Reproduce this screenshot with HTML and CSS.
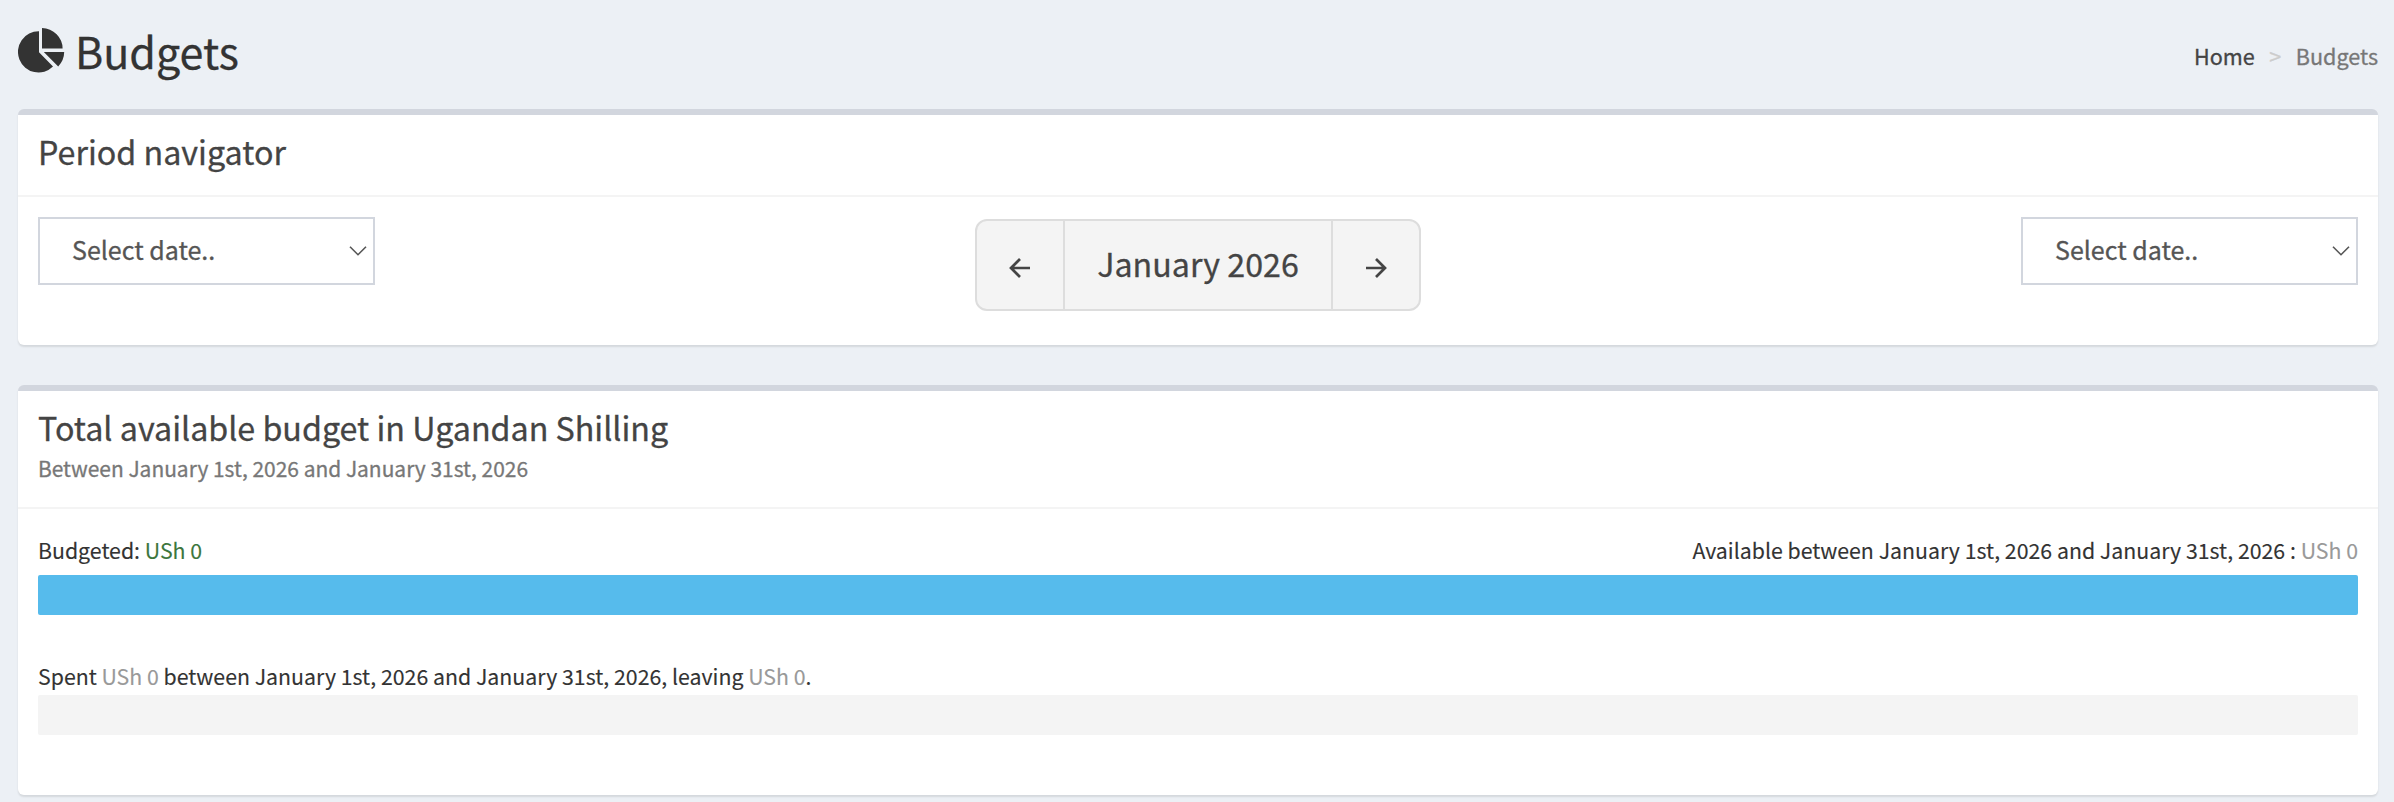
FILE: index.html
```html
<!DOCTYPE html>
<html lang="en">
<head>
<meta charset="utf-8">
<title>Budgets</title>
<link rel="stylesheet" href="styles.css">
</head>
<body>
<header class="page-header">
  <h1 class="page-title">
    <svg class="pie" width="48" height="46" viewBox="0 0 48 46"><path d="M21 4.3V25.3L35 39.6A20.6 20.6 0 1 1 21 4.3ZM24 1A21 20.5 0 0 1 44.6 21.6H24ZM25.8 25H46.2A21 21 0 0 1 40.2 39.4Z"/></svg>
    <span class="page-name">Budgets</span>
  </h1>
  <nav class="breadcrumb"><a class="crumb-link">Home</a><span class="crumb-sep">&gt;</span><span class="crumb-current">Budgets</span></nav>
</header>
<main class="content">
  <section class="box">
    <div class="box-header"><h3 class="box-title">Period navigator</h3></div>
    <div class="box-body navigator">
      <div class="select"><span class="select-text">Select date..</span><svg class="chevron" width="20" height="12" viewBox="0 0 20 12"><path d="M2 1.7L10 9.7L18 1.7"/></svg></div>
      <div class="btn-group">
        <div class="btn btn-arrow"><svg class="arrow" width="22" height="22" viewBox="0 0 22 22"><path d="M21 11H2M11 2L2 11L11 20"/></svg></div>
        <div class="btn btn-period">January 2026</div>
        <div class="btn btn-arrow"><svg class="arrow" width="22" height="22" viewBox="0 0 22 22"><path d="M1 11H20M11 2L20 11L11 20"/></svg></div>
      </div>
      <div class="select"><span class="select-text">Select date..</span><svg class="chevron" width="20" height="12" viewBox="0 0 20 12"><path d="M2 1.7L10 9.7L18 1.7"/></svg></div>
    </div>
  </section>
  <section class="box">
    <div class="box-header header-tall">
      <h3 class="box-title">Total available budget in Ugandan Shilling</h3>
      <div class="subtitle">Between January 1st, 2026 and January 31st, 2026</div>
    </div>
    <div class="box-body budget">
      <div class="line line-budgeted">
        <span>Budgeted: <span class="green">USh 0</span></span>
        <span>Available between January 1st, 2026 and January 31st, 2026 : <span class="gray">USh 0</span></span>
      </div>
      <div class="progress progress-info"></div>
      <div class="line line-spent">
        <span>Spent <span class="gray">USh 0</span> between January 1st, 2026 and January 31st, 2026, leaving <span class="gray">USh 0</span>.</span>
      </div>
      <div class="progress"></div>
    </div>
  </section>
</main>
</body>
</html>
```
FILE: styles.css
```css
* { box-sizing: border-box; }
body {
  margin: 0;
  height: 802px;
  background: #ecf0f5;
  color: #333;
  font-family: "Noto Sans CJK SC", "Noto Sans", sans-serif;
  font-size: 21.3px;
  -webkit-text-stroke: .3px currentColor;
}
.page-header {
  display: flex;
  justify-content: space-between;
  height: 109px;
  padding: 24px 16px 0 18px;
}
.page-title {
  display: flex;
  margin: 0;
  font-size: 43px;
  font-weight: 400;
  line-height: 52px;
}
.pie { margin-top: 3px; fill: #333; }
.page-name { margin-left: 9px; }
.breadcrumb {
  display: flex;
  padding-top: 17px;
  font-size: 21.6px;
  line-height: 30px;
}
.crumb-link { color: #444; }
.crumb-sep { width: 41px; text-align: center; color: #ccc; }
.crumb-current { color: #777; }
.content { padding: 0 16px 0 18px; }
.box {
  margin-bottom: 40px;
  background: #fff;
  border-top: 6px solid #d2d6de;
  border-radius: 6px;
  box-shadow: 0 2px 2px rgba(0, 0, 0, .1);
}
.box:last-child { margin-bottom: 0; }
.box-header {
  height: 82px;
  padding: 18px 20px 0;
  border-bottom: 2px solid #f4f4f4;
}
.header-tall { height: 118px; }
.box-title {
  margin: 0;
  color: #444;
  font-size: 32.24px;
  font-weight: 400;
  line-height: 36px;
}
.subtitle { margin-top: 9px; color: #777; font-size: 20.95px; line-height: 28px; }
.box-body { padding: 20px; }
.navigator {
  display: flex;
  justify-content: space-between;
  align-items: flex-start;
  height: 148px;
}
.select {
  display: flex;
  justify-content: space-between;
  align-items: center;
  width: 337px;
  height: 68px;
  padding: 0 5px 0 32px;
  border: 2px solid #d2d6de;
  color: #555;
  font-size: 25px;
}
.select-text { line-height: 36px; padding-bottom: 4px; }
.chevron { fill: none; stroke: #555; stroke-width: 1.6; }
.btn-group {
  display: flex;
  height: 92px;
  margin-top: 2px;
  border: 2px solid #ddd;
  border-radius: 12px;
  background: #f4f4f4;
}
.btn { display: flex; align-items: center; justify-content: center; color: #444; }
.btn-arrow { width: 86px; padding-top: 6px; }
.btn-period {
  width: 270px;
  padding-bottom: 4px;
  border: solid #ddd;
  border-width: 0 2px;
  font-size: 32.2px;
}
.arrow { fill: none; stroke: #444; stroke-width: 2.7; }
.budget { height: 286px; -webkit-text-stroke-width: .12px; }
.line { display: flex; justify-content: space-between; line-height: 28px; }
.line-budgeted { height: 46px; padding-top: 7px; }
.line-spent { height: 80px; padding-top: 47px; }
.green { color: #3c763d; }
.gray { color: #999; }
.progress { height: 40px; border-radius: 2px; background: #f4f4f4; }
.progress-info { background: #56bbec; }
```
